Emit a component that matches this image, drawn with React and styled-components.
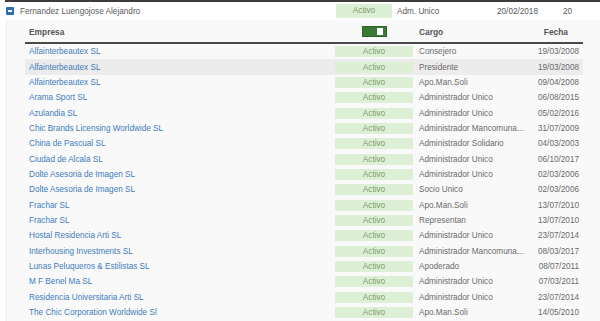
import React from "react"
import styled, { createGlobalStyle } from "styled-components"

const GlobalStyle = createGlobalStyle`
  html, body {
    margin: 0;
    padding: 0;
    background: #ffffff;
    font-family: "Liberation Sans", Arial, sans-serif;
  }
`

const Page = styled.div`
  width: 600px;
  height: 321px;
  overflow: hidden;
  background: #ffffff;
`

const TopRow = styled.div`
  margin-left: 5px;
  border-top: 2px solid #3d3d3d;
  height: 18px;
  display: grid;
  grid-template-columns: 15px 316px 56px 105px 66px 1fr;
  align-items: center;
  font-size: 8.2px;
  color: #5a5a5a;
`

const Collapse = styled.span`
  position: relative;
  display: block;
  width: 8px;
  height: 8px;
  margin-left: 1px;
  background: #2c6db5;
  border-radius: 1px;
  &::after {
    content: "";
    position: absolute;
    left: 2px;
    top: 3px;
    width: 4px;
    height: 2px;
    background: #ffffff;
  }
`

const Badge = styled.div`
  height: ${p => (p.$tall ? "14px" : "11px")};
  line-height: ${p => (p.$tall ? "14px" : "11px")};
  background: #ddefd5;
  color: #7a9c70;
  text-align: center;
  font-size: 8.2px;
`

const Cell = styled.div`
  padding-left: ${p => p.$pl || 0}px;
  white-space: nowrap;
  overflow: hidden;
`

const Panel = styled.div`
  margin-left: 6px;
  height: 303px;
  background: #f9f9f9;
  border-left: 1px solid #eeeeee;
  padding-left: 18px;
`

const Table = styled.div`
  width: 558px;
`

const cols = "310px 78px 117px 53px"

const Header = styled.div`
  display: grid;
  grid-template-columns: ${cols};
  align-items: center;
  padding-top: 1px;
  border-bottom: 2px solid #4a4a4a;
  box-sizing: border-box;
  height: 24px;
  font-size: 8.4px;
  font-weight: bold;
  color: #555555;
`

const HeadCell = styled.div`
  padding-left: ${p => p.$pl || 0}px;
`

const FechaHead = styled.div`
  justify-self: end;
  margin-right: 15px;
`

const Toggle = styled.span`
  display: block;
  margin: 0 auto;
  width: 25px;
  height: 11px;
  background: #3a7a35;
  box-sizing: border-box;
  border: 1px solid #2d6429;
  position: relative;
  &::after {
    content: "";
    position: absolute;
    right: 3px;
    top: 1px;
    width: 6px;
    height: 7px;
    background: #ffffff;
  }
`

const Row = styled.div`
  display: grid;
  grid-template-columns: ${cols};
  align-items: center;
  height: 15.35px;
  font-size: 8.2px;
  background: ${p => (p.$hover ? "#ececec" : "transparent")};
`

const Company = styled(Cell)`
  color: #3f7cbd;
`

const Muted = styled(Cell)`
  color: #6a6a6a;
`

const DateCell = styled(Cell)`
  color: #6a6a6a;
  text-align: right;
  padding-right: 4px;
`

const rows = [
  ["Alfainterbeautex SL", "Consejero", "19/03/2008"],
  ["Alfainterbeautex SL", "Presidente", "19/03/2008"],
  ["Alfainterbeautex SL", "Apo.Man.Soli", "09/04/2008"],
  ["Arama Sport SL", "Administrador Único", "06/08/2015"],
  ["Azulandia SL", "Administrador Único", "05/02/2016"],
  ["Chic Brands Licensing Worldwide SL", "Administrador Mancomuna...", "31/07/2009"],
  ["China de Pascual SL", "Administrador Solidario", "04/03/2003"],
  ["Ciudad de Alcala SL", "Administrador Único", "06/10/2017"],
  ["Dolte Asesoria de Imagen SL", "Administrador Único", "02/03/2006"],
  ["Dolte Asesoria de Imagen SL", "Socio Único", "02/03/2006"],
  ["Frachar SL", "Apo.Man.Soli", "13/07/2010"],
  ["Frachar SL", "Representan", "13/07/2010"],
  ["Hostal Residencia Arti SL", "Administrador Único", "23/07/2014"],
  ["Interhousing Investments SL", "Administrador Mancomuna...", "08/03/2017"],
  ["Lunas Peluqueros & Estilistas SL", "Apoderado", "08/07/2011"],
  ["M F Benel Ma SL", "Administrador Único", "07/03/2011"],
  ["Residencia Universitaria Arti SL", "Administrador Único", "23/07/2014"],
  ["The Chic Corporation Worldwide Sl", "Apo.Man.Soli", "14/05/2010"],
]

export default function App() {
  return (
    <Page>
      <GlobalStyle />
      <TopRow>
        <Collapse />
        <Cell>Fernandez Luengojose Alejandro</Cell>
        <Badge $tall>Activo</Badge>
        <Cell $pl={5}>Adm. Unico</Cell>
        <Cell>20/02/2018</Cell>
        <Cell>20</Cell>
      </TopRow>
      <Panel>
        <Table>
          <Header>
            <HeadCell $pl={4}>Empresa</HeadCell>
            <HeadCell>
              <Toggle />
            </HeadCell>
            <HeadCell $pl={6}>Cargo</HeadCell>
            <FechaHead>Fecha</FechaHead>
          </Header>
          {rows.map((r, i) => (
            <Row key={i} $hover={i === 1}>
              <Company $pl={4}>{r[0]}</Company>
              <Badge>Activo</Badge>
              <Muted $pl={6}>{r[1]}</Muted>
              <DateCell>{r[2]}</DateCell>
            </Row>
          ))}
        </Table>
      </Panel>
    </Page>
  )
}
